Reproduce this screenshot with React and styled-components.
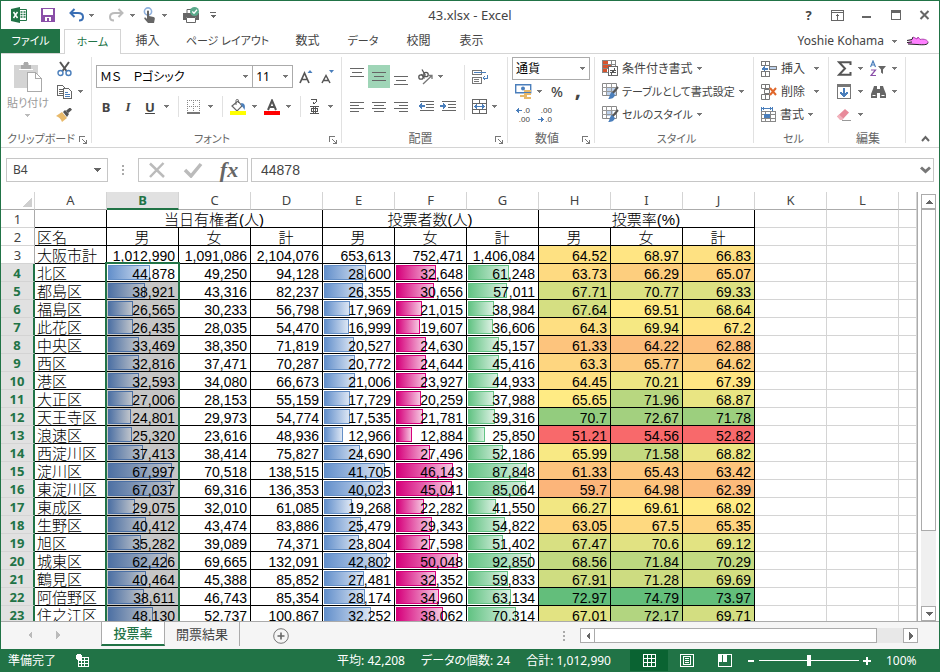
import React from 'react'
import styled, { createGlobalStyle, css } from 'styled-components'

const GREEN = '#217346'
const LINE = '#d4d4d4'
const UI_FONT = "'Noto Sans', 'Noto Sans CJK JP', sans-serif"
const CELL_FONT = "'Liberation Sans', 'Noto Sans CJK JP', sans-serif"

const GlobalStyle = createGlobalStyle`
* {
  box-sizing: border-box;
}
body {
  margin: 0;
  font-family: ${UI_FONT};
  font-size: 12px;
  line-height: 16px;
  font-feature-settings: 'palt';
  color: #444;
}
button, input, select {
  font: inherit;
  font-feature-settings: inherit;
  color: inherit;
  margin: 0;
  padding: 0;
  border: 0;
  border-radius: 0;
  background: none;
}
`

const Window = styled.div`
display: flex;
flex-direction: column;
height: 100vh;
border: 1px solid ${GREEN};
border-bottom: 0;
background: #fff;
overflow: hidden;
`

// ---------- title bar ----------

const TitleBar = styled.header`
display: grid;
grid-template-columns: 1fr auto 1fr;
align-items: center;
height: 28px;
flex: none;
`

const QuickAccess = styled.div`
display: flex;
align-items: center;
padding-left: 7px;
`

const Title = styled.h1`
margin: 0;
font-size: 13px;
font-weight: 400;
`

const WindowButtons = styled.div`
display: flex;
justify-content: flex-end;
`

const WindowButton = styled.button`
display: flex;
align-items: center;
justify-content: center;
width: 29px;
height: 26px;
`

// ---------- ribbon tabs ----------

const TabBar = styled.nav`
display: flex;
align-items: stretch;
height: 25px;
flex: none;
border-bottom: 1px solid ${LINE};
`

const FileTab = styled.button`
width: 59px;
margin-right: 4px;
background: ${GREEN};
color: #fff;
font-size: 11px;
`

const Tab = styled.button`
width: ${p => p.$width}px;
font-size: ${p => p.$kana ? 11 : 12}px;
white-space: nowrap;
${p => p.$active && css`
  border: 1px solid ${LINE};
  border-bottom: 0;
  margin-bottom: -1px;
  background: #fff;
  color: ${GREEN};
`}
`

const Account = styled.button`
display: flex;
align-items: center;
gap: 8px;
margin-left: auto;
padding-right: 10px;
`

// ---------- ribbon ----------

const Ribbon = styled.div`
display: flex;
flex: none;
height: 94px;
border-bottom: 1px solid ${LINE};
`

const Group = styled.section`
display: flex;
flex-direction: column;
justify-content: space-between;
width: ${p => p.$width}px;
padding: ${p => p.$top || 3}px 3px 0 ${p => p.$left || 3}px;
background: linear-gradient(#e1e1e1, #e1e1e1) right 3px / 1px 86px no-repeat;
`

const GroupLabel = styled.div`
display: flex;
align-items: center;
height: 17px;
color: #666;
font-size: ${p => p.$kana ? 11 : 12}px;

span {
  flex: 1;
  text-align: center;
  white-space: nowrap;
}
`

const Launcher = styled.button`
display: flex;
width: 10px;
padding-top: 2px;
`

const Columns = styled.div`
display: flex;
`

const Column = styled.div`
display: flex;
flex-direction: column;
gap: ${p => p.$gap || 0}px;
`

const Row = styled.div`
display: flex;
align-items: center;
height: 23px;
`

const Spacer = styled.div`
width: ${p => p.$width}px;
flex: none;
`

const ToolButton = styled.button`
display: flex;
align-items: center;
justify-content: center;
flex: none;
width: ${p => p.$width || 22}px;
height: 23px;
background: ${p => p.$on ? '#9fd5b7' : 'none'};
`

const CaretButton = styled(ToolButton)`
width: 12px;
`

const Separator = styled.div`
width: 1px;
height: ${p => p.$tall ? 55 : 21}px;
margin: 0 4px 0 5px;
background: #e1e1e1;
`

const PasteButton = styled.button`
display: flex;
flex-direction: column;
align-items: center;
width: 50px;
height: 66px;
padding-top: 4px;
color: #999;
font-size: 11px;
gap: 3px;
`

const MenuButton = styled.button`
display: flex;
align-items: center;
gap: 3px;
height: 23px;
white-space: nowrap;
font-size: ${p => p.$kana ? 11 : 12}px;

svg:last-child {
  margin-left: ${p => p.$wide ? 6 : 1}px;
}
`

const SelectBox = styled.label`
position: relative;
display: block;
width: ${p => p.$width}px;
margin-left: ${p => p.$joined ? -1 : 0}px;

select {
  width: 100%;
  height: 23px;
  padding: 0 3px;
  appearance: none;
  border: 1px solid #ababab;
  background: #fff;
  color: #000;
}
svg {
  position: absolute;
  right: 4px;
  top: 10px;
  pointer-events: none;
}
`

const Letter = styled.span`
font-size: 13px;
line-height: 16px;
font-weight: ${p => p.$italic ? 600 : 700};
font-style: ${p => p.$italic ? 'italic' : 'normal'};
font-family: ${p => p.$italic ? "'Liberation Serif', serif" : UI_FONT};
text-decoration: ${p => p.$underline ? 'underline' : 'none'};
`

const Percent = styled.span`
font-size: 14px;
font-weight: 500;
`

const Comma = styled.span`
font-size: 22px;
line-height: 8px;
height: 16px;
font-weight: 700;
`

const Collapse = styled.button`
display: flex;
flex: 1;
align-items: flex-end;
justify-content: center;
padding: 0 0 5px 5px;
`

// ---------- formula bar ----------

const FormulaBar = styled.div`
display: flex;
flex: none;
padding: 10px 5px;
font-family: ${CELL_FONT};
font-size: 14px;
`

const NameBox = styled.label`
display: flex;
align-items: center;
width: 102px;
height: 24px;
border: 1px solid #c6c6c6;
padding: 0 6px;

input {
  flex: 1;
  min-width: 0;
  font-family: ${UI_FONT};
  font-size: 12px;
}
`

const Grip = styled.div`
display: flex;
align-items: center;
justify-content: center;
width: ${p => p.$width}px;
`

const EntryButtons = styled.div`
display: flex;
align-items: center;
width: 110px;
height: 24px;
margin-right: 3px;
border: 1px solid #c6c6c6;

button {
  display: flex;
  flex: 1;
  justify-content: center;
}
`

const FormulaField = styled.label`
display: flex;
align-items: center;
flex: 1;
height: 24px;
border: 1px solid #c6c6c6;
padding: 0 2px 0 9px;

input {
  flex: 1;
  min-width: 0;
}
`

// ---------- sheet ----------

const SheetArea = styled.main`
display: flex;
flex: 1;
min-height: 0;
border-bottom: 1px solid #ababab;
`

const GridPane = styled.div`
flex: 1;
min-width: 0;
overflow: hidden;
border-right: 1px solid #ababab;
`

const Grid = styled.table`
width: 100%;
table-layout: fixed;
border-collapse: separate;
border-spacing: 0;
font-family: ${CELL_FONT};
font-feature-settings: normal;
color: #000;

th, td {
  padding: 0;
}
`

const RowHeadCol = styled.col`
width: 34px;
`

const DataCol = styled.col`
width: 72px;
`

const ColumnHead = styled.th`
height: 18px;
border-right: 1px solid ${LINE};
border-bottom: 1px solid #ababab;
font: 400 13px/15px ${UI_FONT};
color: #444;
${p => p.$selected && css`
  background: #e1e1e1;
  border-bottom: 2px solid ${GREEN};
  color: ${GREEN};
  font-weight: 700;
`}
`

const Corner = styled(ColumnHead)`
svg {
  display: block;
  margin: 3px 2px 0 auto;
}
`

const RowHead = styled.th`
height: 18px;
border-right: 1px solid #ababab;
border-bottom: 1px solid ${LINE};
font: 400 13px/15px ${UI_FONT};
color: #444;

&& {
  padding-top: 2px;
}
${p => p.$selected && css`
  background: #e1e1e1;
  border-right: 2px solid ${GREEN};
  color: ${GREEN};
  font-weight: 700;
`}
`

const Cell = styled.td`
position: relative;
height: 18px;
border-right: 1px solid ${p => p.$empty ? LINE : '#000'};
border-bottom: 1px solid ${p => p.$empty ? LINE : '#000'};
background: ${p => p.$shaded ? '#c6c6c6' : 'none'};
text-align: ${p => p.$align || 'right'};

${p => p.$selected && css`
  &::after {
    content: '';
    position: absolute;
    z-index: 2;
    inset: ${p.$active ? '-2px' : '0'} -2px -1px -2px;
    border: solid ${GREEN};
    border-width: ${p.$active ? '2px' : '0'} 2px 0 2px;
  }
`}
`

const CellText = styled.div`
position: relative;
z-index: 1;
height: 17px;
padding: 0 3px 0 2px;
overflow: hidden;
white-space: nowrap;
font-size: ${p => p.$label ? 15 : 14}px;
font-weight: ${p => p.$label ? 300 : 400};
line-height: 20px;
`

const barColors = {
  blue: ['#638ec6', '#6490cb', '#dce6f4'],
  shadow: ['#4a6fa5', '#4e71a4', '#bfc4cb'],
  pink: ['#d6007b', '#d6007b', '#f6c8e1'],
  green: ['#63c384', '#63c384', '#dcf1e3']
}

const Bar = styled.div`
position: absolute;
left: 1px;
top: 1px;
bottom: 1px;
border: 1px solid ${p => barColors[p.$color][0]};
background: linear-gradient(to right, ${p => barColors[p.$color][1]}, ${p => barColors[p.$color][2]});
`

const VScroll = styled.div`
display: flex;
flex-direction: column;
width: 21px;
padding: 2px 3px 0;
`

const ScrollButton = styled.button`
display: flex;
align-items: center;
justify-content: center;
flex: none;
width: 15px;
height: 15px;
border: 1px solid #ababab;
background: #fff;
`

const VTrack = styled.div`
flex: 1;
background: #f0f0f0;
`

const VThumb = styled.div`
height: 81%;
border: 1px solid #ababab;
background: #fff;
`

// ---------- sheet tabs ----------

const SheetBar = styled.div`
display: flex;
flex: none;
height: 27px;
background: #f5f5f5;
font-size: 13px;
`

const SheetNav = styled.div`
display: flex;
align-items: center;
width: 100px;
height: 26px;
padding-left: 15px;

button {
  display: flex;
  justify-content: center;
  width: 28px;
}
`

const SheetTab = styled.button`
height: 24px;
width: ${p => p.$active ? 64 : 75}px;
border-right: 1px solid #ababab;
${p => p.$active && css`
  border-left: 1px solid #ababab;
  border-bottom: 2px solid ${GREEN};
  background: #fff;
  color: ${GREEN};
  font-weight: 500;
`}
`

const AddSheet = styled.button`
display: flex;
align-items: center;
margin: 0 auto 0 33px;
`

const HScroll = styled.div`
display: flex;
width: 338px;
margin-right: 21px;
padding-top: 6px;
`

const HTrack = styled.div`
flex: 1;
height: 15px;
background: #e8e8e8;
`

const HThumb = styled.div`
width: 92%;
height: 15px;
margin-left: -1px;
border: 1px solid #ababab;
background: #fff;
`

// ---------- status bar ----------

const StatusBar = styled.footer`
display: flex;
align-items: center;
flex: none;
height: 23px;
padding: 0 19px 0 7px;
background: ${GREEN};
color: #fff;

button {
  display: flex;
  align-items: center;
  justify-content: center;
  height: 21px;
}
`

const Summary = styled.div`
display: flex;
gap: 16px;
margin-left: auto;
padding-right: 19px;
white-space: nowrap;
`

const ViewButton = styled.button`
width: 38px;
background: ${p => p.$on ? '#0a6332' : 'none'};
`

const ZoomButton = styled.button`
width: 14px;
`

const ZoomSlider = styled.input`
width: 100px;
height: 13px;
margin: 0 1px;
appearance: none;
background: linear-gradient(#fff, #fff) center / 100% 1px no-repeat;

&::-webkit-slider-thumb {
  appearance: none;
  width: 4px;
  height: 11px;
  background: #fff;
}
`

const ZoomLevel = styled.span`
width: 34px;
margin-left: 12px;
`

// ---------- icons ----------

const Svg = ({ w = 16, h = 16, soft, children }) => (
  <svg width={w} height={h} viewBox={`0 0 ${w} ${h}`} fill='none' aria-hidden='true' shapeRendering={soft ? 'auto' : 'crispEdges'}>
    {children}
  </svg>
)

const Caret = ({ color = '#777' }) => (
  <Svg w={6} h={3}><path d='M0 0h5v1h-1v1h-1v1h-1v-1h-1v-1h-1z' fill={color} /></Svg>
)

const LauncherIcon = () => (
  <Svg w={8} h={8}>
    <path d='M.5 6V.5H6M3 3l4 4M7.500 3.500v4h-4' stroke='#777' />
  </Svg>
)

const ExcelIcon = () => (
  <Svg soft>
    <path d='M8 2.500h7.500v11H8' stroke={GREEN} fill='#fff' />
    <path d='M9.500 5h2M12.500 5h2M9.500 7.500h2M12.500 7.500h2M9.500 10h2M12.500 10h2' stroke={GREEN} strokeWidth='1.400' />
    <path d='M0 2l9-2v16l-9-2z' fill={GREEN} />
    <path d='M2.500 5l4 6M6.500 5l-4 6' stroke='#fff' strokeWidth='1.500' />
  </Svg>
)

const SaveIcon = () => (
  <Svg w={14} h={14}>
    <path d='M0 0h14v14H0z' fill='#8a4fa8' />
    <path d='M2 1h10v6H2zM4 9h6v4H8v-3H6v3H4z' fill='#fff' />
  </Svg>
)

const UndoIcon = ({ flip, color }) => (
  <Svg w={15} h={14} soft>
    <g transform={flip ? 'matrix(-1 0 0 1 15 0)' : undefined}>
      <path d='M2 5h7c3 0 5 1.500 5 4s-2 3.500-4 3.500' stroke={color} strokeWidth='2' />
      <path d='M5.500 1L1.500 5l4 4' stroke={color} strokeWidth='2' />
    </g>
  </Svg>
)

const TouchIcon = () => (
  <Svg w={13} h={17} soft>
    <circle cx='5' cy='4.500' r='3.600' stroke='#8fb0dc' strokeWidth='1.600' />
    <path d='M4 4.500c0-1.200 2-1.200 2 0V9l4.500 1c1 .3 1.500 1 1.300 2L11 16H5l-3.500-4c-.8-1.200.5-2 1.300-1.200L4 12z' fill='#666' />
  </Svg>
)

const PrintIcon = () => (
  <Svg w={17} h={17} soft>
    <path d='M4 7V2.500h4' stroke='#666' />
    <path d='M0 6h16v7h-3v-3H3v3H0z' fill='#666' />
    <path d='M3.500 10.500h9v5h-9z' fill='#fff' stroke='#666' />
    <circle cx='11.500' cy='4.500' r='4.500' fill='#5aa98b' />
    <path d='M9.300 4.500l1.700 1.700 3-3.400' stroke='#fff' strokeWidth='1.300' />
  </Svg>
)

const CustomizeIcon = () => (
  <Svg w={6} h={7}><path d='M0 0h6v1H0zM0 3h6L3 6z' fill='#666' /></Svg>
)

const DisplayIcon = () => (
  <Svg w={13} h={11}>
    <path d='M.5.500h12v10H.5zM0 2.500h13M6.500 4.500v5M4.500 6.500l2-2 2 2' stroke='#666' />
  </Svg>
)

const MinimizeIcon = () => (
  <Svg w={9} h={10}><path d='M0 6h9v2H0z' fill='#666' /></Svg>
)

const MaximizeIcon = () => (
  <Svg w={10} h={10}><path d='M0 0h10v10H0zM1 3v6h8V3z' fill='#666' fillRule='evenodd' /></Svg>
)

const CloseIcon = () => (
  <Svg w={11} h={10} soft><path d='M1.500 1l8 8M9.500 1l-8 8' stroke='#666' strokeWidth='2' /></Svg>
)

const AvatarIcon = () => (
  <Svg w={23} h={10} soft>
    <path d='M1 4.500l5-1 1-2.500 4 2 1-2 2 2.500c4-1 8 .5 8 3S17 9 11 8.500L2 8l-1-1.500 5-.5z' fill='#ff80ff' />
    <path d='M1 4.500l5-1 1-2.500M1 6.500l5-.5M2 8l9 .5c6 .5 11 .5 11-2' stroke='#222' />
    <path d='M7 1l4 2 1-2 2 2.500c4-1 8 .5 8 3' stroke='#b040b0' />
  </Svg>
)

const PasteIcon = () => (
  <Svg w={28} h={31}>
    <path d='M0 4h9V2h6v2h9v23H0z' fill='#d4d4d4' />
    <path d='M7 4h3V1h4v3h3v4H7z' fill='#aaa' />
    <path d='M5 8h14' stroke='#fff' />
    <path d='M13.500 11.500h8l6 6v13h-14z' fill='#fff' stroke='#aaa' />
    <path d='M21.500 11.500v6h6' stroke='#aaa' />
  </Svg>
)

const CutIcon = () => (
  <Svg w={15} h={16} soft>
    <path d='M3 1l6.500 9M12 1L5.500 10' stroke='#555' strokeWidth='2' />
    <circle cx='3.500' cy='12' r='2.500' stroke='#4a7ebb' strokeWidth='1.400' />
    <circle cx='11.500' cy='12' r='2.500' stroke='#4a7ebb' strokeWidth='1.400' />
  </Svg>
)

const CopyIcon = () => (
  <Svg w={15} h={14}>
    <path d='M.5.500h5l3 3v7h-8zM2 4.500h4M2 6.500h4M2 8.500h4' stroke='#666' />
    <path d='M6.500 3.500h5l3 3v7h-8z' fill='#fff' stroke='#666' />
    <path d='M8 7.500h3M8 9.500h5M8 11.500h5' stroke='#4a7ebb' />
  </Svg>
)

const BrushIcon = () => (
  <Svg w={16} h={14} soft>
    <path d='M0 8l6-4 5 6-5 4c-1-3-3-5-6-6z' fill='#e8b96a' />
    <path d='M7 4l2-2 4 4-2 3z' fill='#555' />
    <path d='M11 4l4-3.500' stroke='#555' strokeWidth='3' />
  </Svg>
)

const FontSizeIcon = ({ down }) => (
  <Svg w={14} h={16} soft>
    {down
      ? <path d='M1 14L5 6.500 9 14M2.500 11.500h5' stroke='#555' strokeWidth='1.500' />
      : <path d='M1 14L5.500 4 10 14M2.500 10.500h6' stroke='#555' strokeWidth='1.700' />}
    <path d={down ? 'M8 1h5l-2.500 3z' : 'M8.500 4h5L11 1z'} fill='#4a7ebb' />
  </Svg>
)

const BordersIcon = () => (
  <Svg w={14} h={14}>
    <path d='M.5 0v13M6.500 0v13M12.500 0v13M0 .5h13M0 6.500h13' stroke='#888' strokeDasharray='1 1' />
    <path d='M0 13h13' stroke='#777' strokeWidth='2' />
  </Svg>
)

const FillIcon = () => (
  <Svg w={16} h={16} soft>
    <path d='M2 7l6-5 4 5-5 5z' fill='#fff' stroke='#666' strokeWidth='1.200' />
    <path d='M6 6V1.500c0-1.500 2.500-1.500 2.500 0V4' stroke='#666' />
    <path d='M11 4c4 0 4.500 3 3.500 7-1-2-1.500-3-3-4z' fill='#4a7ebb' />
    <path d='M0 12h16v4H0z' fill='#ff0' />
  </Svg>
)

const FontColorIcon = () => (
  <Svg w={16} h={16} soft>
    <path d='M4 11l4-9.500 4 9.500M5.500 8h5' stroke='#555' strokeWidth='2' />
    <path d='M0 12h16v4H0z' fill='#f00' />
  </Svg>
)

const PhoneticIcon = () => (
  <Svg w={10} h={17}>
    <path d='M1 1.500h6M6.500 1.500v2l-3 3M3.500 3.500v2' stroke='#555' />
    <path d='M0 8.500h9M3.500 8v8M5.500 8v8M1.500 10.500h6v3h-6zM0 15.500h9' stroke='#555' />
  </Svg>
)

const LinesIcon = ({ rows, y = 0 }) => (
  <Svg w={22} h={23}>
    {rows.map(([x, width], i) => (
      <path key={i} d={`M${x} ${y + i * (rows.length > 3 ? 3 : 4) + 0.5}h${width}`} stroke='#666' />
    ))}
  </Svg>
)

const OrientationIcon = () => (
  <Svg w={17} h={16} soft>
    <circle cx='4' cy='8' r='2.200' stroke='#555' strokeWidth='1.300' />
    <circle cx='9' cy='5.500' r='2.200' stroke='#555' strokeWidth='1.300' />
    <path d='M4.500 5l3 4.500M5 .5l3.500 6' stroke='#555' strokeWidth='1.300' />
    <path d='M6 15l9-8.500M11.500 6.500h3.500v3.500' stroke='#777' strokeWidth='1.300' />
  </Svg>
)

const IndentIcon = ({ right }) => (
  <Svg w={16} h={11}>
    <path d='M2 .5h14M8 3.500h8M8 6.500h8M2 9.500h14' stroke='#666' />
    <path d={right ? 'M0 4h3V2l4 3-4 3V6H0z' : 'M7 4H4V2L0 5l4 3V6h3z'} fill='#4a7ebb' />
  </Svg>
)

const WrapIcon = () => (
  <Svg w={17} h={16}>
    <path d='M.5 1.500h9v4h-9zM.5 8.500h9v6h-9zM2 10.500h5M2 12.500h5' stroke='#777' />
    <path d='M2 3.500h12M15.500 6v3h-4M13 7l-2 2 2 2' stroke='#4a7ebb' />
  </Svg>
)

const MergeIcon = () => (
  <Svg w={15} h={15}>
    <path d='M.5.500h14v14H.5zM.5 4.500h14M.5 10.500h14M7.500 0v4M7.500 11v4' stroke='#666' />
    <path d='M3 7.500h9M5 5.500l-2 2 2 2M10 5.500l2 2-2 2' stroke='#4a7ebb' />
  </Svg>
)

const CurrencyIcon = () => (
  <Svg w={17} h={17} soft>
    <path d='M.7 1.700h15v8H.7z' fill='#fff' stroke='#4a7ebb' strokeWidth='1.400' />
    <circle cx='8' cy='5.500' r='2' fill='#4a7ebb' />
    <path d='M9 7h7v2H9zM9 10h7v2H9zM5 12h7v2H5zM9 14h7v2H9z' fill='#e8b96a' />
  </Svg>
)

const Decimals = styled.span`
display: flex;
flex-direction: column;
font-family: ${CELL_FONT};
font-size: 8px;
line-height: 9px;
text-align: right;

span {
  display: flex;
  align-items: center;
  justify-content: flex-end;
  gap: 1px;
}
`

const SmallArrow = ({ right }) => (
  <Svg w={6} h={5}><path d={right ? 'M0 2.500h5M3 .5l2 2-2 2' : 'M1 2.500h5M3 .5l-2 2 2 2'} stroke='#4a7ebb' /></Svg>
)

const ConditionalIcon = () => (
  <Svg w={17} h={17}>
    <path d='M.5.500h13v12H.5zM0 4.500h13M0 8.500h13M9.500 0v12' stroke='#888' />
    <path d='M1 1h5v3H1zM1 5h8v3H1zM1 9h4v3H1z' fill='#d6532d' />
    <path d='M6.500 6.500h9v9h-9z' fill='#fff' stroke='#666' />
    <path d='M8 10.500h6M8 12.500h6M13 8l-4 7' stroke='#555' />
  </Svg>
)

const TableStyleIcon = ({ plain }) => (
  <Svg w={17} h={17} soft>
    <path d='M.5.500h14v12H.5z' fill='#fff' stroke='#888' />
    <path d={plain ? 'M4 4h7v6H4z' : 'M5 4h9v8H5z'} fill='#bcd0ea' />
    <path d='M0 4.500h15M0 8.500h15M4.500 0v12M9.500 0v12' stroke='#999' />
    <path d='M16 4l-6 7' stroke='#555' strokeWidth='2' />
    <path d='M10 9l3 3c-1 3-3 4-7 4 2-1 1-5 4-7z' fill='#4a7ebb' />
  </Svg>
)

const CellsInsertIcon = () => (
  <Svg w={17} h={16}>
    <path d='M.5.500h8v4h-8zM4.500 0v4M.5 10.500h8v5h-8zM4.500 11v5' stroke='#777' />
    <path d='M8.500 5.500h7v3h-7z' fill='#bcd0ea' stroke='#777' />
    <path d='M1 7.500h6M4 5.500l-2 2 2 2' stroke='#4a7ebb' strokeWidth='2' />
  </Svg>
)

const CellsDeleteIcon = () => (
  <Svg w={17} h={16} soft>
    <path d='M.5.500h8v4h-8zM4.500 0v4M.5 10.500h8v5h-8zM4.500 11v5M3.500 5.500h5v4h-5z' stroke='#777' />
    <path d='M9 4l6 7M15 4l-6 7' stroke='#e0672b' strokeWidth='2' />
  </Svg>
)

const CellsFormatIcon = () => (
  <Svg w={16} h={16}>
    <path d='M.5 0v4M11.500 0v4M1 1.500h10M3 .5l-2 1 2 1M9 .5l2 1-2 1' stroke='#4a7ebb' />
    <path d='M.5 4.500h14v10H.5zM0 7.500h15M0 11.500h15M4.500 4v11M9.500 4v11' stroke='#888' />
    <path d='M3 7h6v4H3z' fill='#4a7ebb' />
  </Svg>
)

const SumIcon = () => (
  <Svg w={15} h={15} soft><path d='M13.500 4V1.200H2L8 7.500l-6 6.300h11.500V11' stroke='#555' strokeWidth='2' /></Svg>
)

const SortIcon = () => (
  <Svg w={17} h={17} soft>
    <path d='M.5 7L3 1l2.500 6M1.500 5h3' stroke='#4a7ebb' strokeWidth='1.200' />
    <path d='M1 10h4.500L1 15.500h5' stroke='#8a4fa8' strokeWidth='1.200' />
    <path d='M8 6h8l-3 3.500V14l-2-1.500v-3z' fill='#666' />
  </Svg>
)

const FillDownIcon = () => (
  <Svg w={14} h={15}>
    <path d='M.5.500h13v14H.5z' stroke='#777' />
    <path d='M0 0h14v3H0z' fill='#777' />
    <path d='M7 4v8M3.500 8.500L7 12l3.500-3.500' stroke='#4a7ebb' strokeWidth='2' />
  </Svg>
)

const FindIcon = () => (
  <Svg w={15} h={14} soft>
    <path d='M3 1h3v3h3V1h3l1 3 2 5v4H9V8H6v5H0V9l2-5z' fill='#666' />
    <path d='M1.500 10.500h3M10.500 10.500h3' stroke='#fff' />
  </Svg>
)

const EraserIcon = () => (
  <Svg w={14} h={13} soft>
    <path d='M0 8.500L8 1l4 3.500L5 12z' fill='#e88a9a' />
    <path d='M0 8.500l2-2 4.500 4L5 12H3z' fill='#f2b3bd' />
    <path d='M5 12.500h9' stroke='#999' />
  </Svg>
)

const CollapseIcon = () => (
  <Svg w={9} h={7} soft><path d='M1 6l3.500-4L8 6' stroke='#666' strokeWidth='2' /></Svg>
)

const DotsIcon = () => (
  <Svg w={2} h={10}><path d='M0 0h2v2H0zM0 4h2v2H0zM0 8h2v2H0z' fill='#aaa' /></Svg>
)

const CancelIcon = () => (
  <Svg w={18} h={16} soft><path d='M2 1.500L16 15M15.500 1L2 15' stroke='#bbb' strokeWidth='2.500' /></Svg>
)

const EnterIcon = () => (
  <Svg w={20} h={16} soft><path d='M2 8l6 6L18 2' stroke='#bbb' strokeWidth='3.500' /></Svg>
)

const FxLabel = styled.span`
font: italic 700 22px/22px 'Liberation Serif', serif;
color: #666;
`

const ExpandIcon = () => (
  <Svg w={11} h={8} soft><path d='M1 1.500l4.500 4 4.500-4' stroke='#777' strokeWidth='3' /></Svg>
)

const CornerIcon = () => (
  <Svg w={10} h={10}><path d='M10 0v10H0z' fill='#cfcfcf' /></Svg>
)

const triangles = {
  up: 'M0 4l4-4 4 4z',
  down: 'M0 0h8L4 4z',
  left: 'M4 0v8L0 4z',
  right: 'M0 0v8l4-4z'
}

const Triangle = ({ dir, color = '#666' }) => {
  const side = dir === 'left' || dir === 'right'
  return <Svg w={side ? 4 : 8} h={side ? 8 : 4}><path d={triangles[dir]} fill={color} /></Svg>
}

const AddIcon = () => (
  <Svg w={16} h={16} soft>
    <circle cx='8' cy='8' r='7.300' stroke='#777' />
    <path d='M8 4.500v7M4.500 8h7' stroke='#666' strokeWidth='1.600' />
  </Svg>
)

const MacroIcon = () => (
  <Svg w={13} h={13}>
    <path d='M2.500 3.500h10v9h-10zM2 6.500h10M2 9.500h10M5.500 4v8M8.500 4v8' stroke='#fff' />
    <circle cx='3' cy='3' r='3' fill='#fff' />
  </Svg>
)

const NormalViewIcon = () => (
  <Svg w={13} h={13}><path d='M.5.500h12v12H.5zM.5 4.500h12M.5 8.500h12M4.500 0v13M8.500 0v13' stroke='#fff' /></Svg>
)

const PageViewIcon = () => (
  <Svg w={14} h={13}><path d='M.5.500h13v12H.5zM3.500 2.500h7v8h-7zM5 4.500h4M5 6.500h4M5 8.500h4' stroke='#fff' /></Svg>
)

const BreakViewIcon = () => (
  <Svg w={14} h={13}>
    <path d='M.5.500h13v12H.5z' stroke='#fff' />
    <path d='M1 1h3v7H1zM5 1h4v7H5z' fill='#fff' />
  </Svg>
)

const PlusMinus = ({ plus }) => (
  <Svg w={8} h={8}><path d={plus ? 'M0 3h3V0h2v3h3v2H5v3H3V5H0z' : 'M1 3h6v2H1z'} fill='#fff' /></Svg>
)

// ---------- data ----------

const columns = ['A', 'B', 'C', 'D', 'E', 'F', 'G', 'H', 'I', 'J', 'K', 'L', '']

const wards = [
  ['大阪市計', 1012990, 1091086, 2104076, 653613, 752471, 1406084, 64.52, 68.97, 66.83],
  ['北区', 44878, 49250, 94128, 28600, 32648, 61248, 63.73, 66.29, 65.07],
  ['都島区', 38921, 43316, 82237, 26355, 30656, 57011, 67.71, 70.77, 69.33],
  ['福島区', 26565, 30233, 56798, 17969, 21015, 38984, 67.64, 69.51, 68.64],
  ['此花区', 26435, 28035, 54470, 16999, 19607, 36606, 64.3, 69.94, 67.2],
  ['中央区', 33469, 38350, 71819, 20527, 24630, 45157, 61.33, 64.22, 62.88],
  ['西区', 32816, 37471, 70287, 20772, 24644, 45416, 63.3, 65.77, 64.62],
  ['港区', 32593, 34080, 66673, 21006, 23927, 44933, 64.45, 70.21, 67.39],
  ['大正区', 27006, 28153, 55159, 17729, 20259, 37988, 65.65, 71.96, 68.87],
  ['天王寺区', 24801, 29973, 54774, 17535, 21781, 39316, 70.7, 72.67, 71.78],
  ['浪速区', 25320, 23616, 48936, 12966, 12884, 25850, 51.21, 54.56, 52.82],
  ['西淀川区', 37413, 38414, 75827, 24690, 27496, 52186, 65.99, 71.58, 68.82],
  ['淀川区', 67997, 70518, 138515, 41705, 46143, 87848, 61.33, 65.43, 63.42],
  ['東淀川区', 67037, 69316, 136353, 40023, 45041, 85064, 59.7, 64.98, 62.39],
  ['東成区', 29075, 32010, 61085, 19268, 22282, 41550, 66.27, 69.61, 68.02],
  ['生野区', 40412, 43474, 83886, 25479, 29343, 54822, 63.05, 67.5, 65.35],
  ['旭区', 35282, 39089, 74371, 23804, 27598, 51402, 67.47, 70.6, 69.12],
  ['城東区', 62426, 69665, 132091, 42802, 50048, 92850, 68.56, 71.84, 70.29],
  ['鶴見区', 40464, 45388, 85852, 27481, 32352, 59833, 67.91, 71.28, 69.69],
  ['阿倍野区', 38611, 46743, 85354, 28174, 34960, 63134, 72.97, 74.79, 73.97],
  ['住之江区', 48130, 52737, 100867, 32252, 38062, 70314, 67.01, 72.17, 69.71]
]

// value at which a data bar fills its cell, by column
const bars = {
  1: { color: 'blue', full: 75500 },
  4: { color: 'blue', full: 48300 },
  5: { color: 'pink', full: 57500 },
  6: { color: 'green', full: 105000 }
}

const scales = {
  7: [51.21, 65.65, 72.97],
  8: [54.56, 69.61, 74.79],
  9: [52.82, 68.02, 73.97]
}

const LOW = [248, 105, 107]
const MID = [255, 235, 132]
const HIGH = [99, 190, 123]

function scaleColor (value, [min, mid, max]) {
  const [from, to, t] = value < mid
    ? [LOW, MID, (value - min) / (mid - min)]
    : [MID, HIGH, (value - mid) / (max - mid)]
  return `rgb(${from.map((c, i) => Math.round(c + (to[i] - c) * t)).join(', ')})`
}

function EmptyCells () {
  return <><Cell $empty /><Cell $empty /><Cell $empty /></>
}

function DataCell ({ value, col, row }) {
  if (col === 0) return <Cell $align='left'><CellText $label>{value}</CellText></Cell>
  const bar = row > 3 && bars[col]
  const selected = col === 1 && row > 3
  const shaded = selected && row > 4
  return (
    <Cell
      $selected={selected} $active={selected && row === 4} $shaded={shaded}
      style={scales[col] && { background: scaleColor(value, scales[col]) }}
    >
      {bar && <Bar $color={shaded ? 'shadow' : bar.color} style={{ width: `${value / bar.full * 100}%` }} />}
      <CellText>{scales[col] ? value : value.toLocaleString('en-US')}</CellText>
    </Cell>
  )
}

function Sheet () {
  return (
    <Grid>
      <colgroup>
        <RowHeadCol />
        {columns.slice(0, 12).map(c => <DataCol key={c} />)}
        <col />
      </colgroup>
      <thead>
        <tr>
          <Corner><CornerIcon /></Corner>
          {columns.map(c => <ColumnHead key={c} $selected={c === 'B'}>{c}</ColumnHead>)}
        </tr>
      </thead>
      <tbody>
        <tr>
          <RowHead>1</RowHead>
          <Cell />
          {['当日有権者(人)', '投票者数(人)', '投票率(%)'].map(t => (
            <Cell key={t} colSpan={3} $align='center'><CellText $label>{t}</CellText></Cell>
          ))}
          <EmptyCells />
        </tr>
        <tr>
          <RowHead>2</RowHead>
          <Cell $align='left'><CellText $label>区名</CellText></Cell>
          {['男', '女', '計', '男', '女', '計', '男', '女', '計'].map((t, i) => (
            <Cell key={i} $align='center'><CellText $label>{t}</CellText></Cell>
          ))}
          <EmptyCells />
        </tr>
        {wards.map((ward, i) => (
          <tr key={ward[0]}>
            <RowHead $selected={i > 0}>{i + 3}</RowHead>
            {ward.map((value, col) => <DataCell key={col} value={value} col={col} row={i + 3} />)}
            <EmptyCells />
          </tr>
        ))}
      </tbody>
    </Grid>
  )
}

function Tool ({ label, menu, children, ...rest }) {
  return (
    <>
      <ToolButton aria-label={label} {...rest}>{children}</ToolButton>
      {menu && <CaretButton aria-label={`${label} メニュー`}><Caret /></CaretButton>}
    </>
  )
}

function Label ({ children, kana, launcher = true }) {
  return (
    <GroupLabel $kana={kana}>
      <span>{children}</span>
      {launcher && <Launcher aria-label={`${children}の設定`}><LauncherIcon /></Launcher>}
    </GroupLabel>
  )
}

function ClipboardGroup () {
  return (
    <Group $width={91} $left={2}>
      <Columns>
        <PasteButton><PasteIcon />貼り付け<Caret color='#bbb' /></PasteButton>
        <Column>
          <Row><Tool label='切り取り'><CutIcon /></Tool></Row>
          <Row><Tool label='コピー' menu><CopyIcon /></Tool></Row>
          <Row><Tool label='書式のコピー'><BrushIcon /></Tool></Row>
        </Column>
      </Columns>
      <Label kana>クリップボード</Label>
    </Group>
  )
}

function FontGroup () {
  return (
    <Group $width={250} $top={11}>
      <Column $gap={7}>
        <Row>
          <Spacer $width={1} />
          <SelectBox $width={158}>
            <select aria-label='フォント名'><option>ＭＳ　Ｐゴシック</option></select>
            <Caret />
          </SelectBox>
          <SelectBox $width={41} $joined>
            <select aria-label='フォント サイズ'><option>11</option></select>
            <Caret />
          </SelectBox>
          <Spacer $width={2} />
          <Tool label='拡大'><FontSizeIcon /></Tool>
          <Tool label='縮小'><FontSizeIcon down /></Tool>
        </Row>
        <Row>
          <Tool label='太字'><Letter>B</Letter></Tool>
          <Tool label='斜体'><Letter $italic>I</Letter></Tool>
          <Tool label='下線' menu><Letter $underline>U</Letter></Tool>
          <Separator />
          <Tool label='罫線' menu><BordersIcon /></Tool>
          <Separator />
          <Tool label='塗りつぶし' menu><FillIcon /></Tool>
          <Tool label='文字色' menu><FontColorIcon /></Tool>
          <Separator />
          <Tool label='ふりがな' $width={20} menu><PhoneticIcon /></Tool>
        </Row>
      </Column>
      <Label kana>フォント</Label>
    </Group>
  )
}

function AlignmentGroup () {
  return (
    <Group $width={166} $top={11} $left={4}>
      <Columns>
        <Column $gap={7}>
          <Row>
            <Tool label='上揃え'><LinesIcon y={3} rows={[[4, 14], [6, 10], [4, 14]]} /></Tool>
            <Tool label='上下中央揃え' $on><LinesIcon y={7} rows={[[4, 14], [6, 10], [4, 14]]} /></Tool>
            <Tool label='下揃え'><LinesIcon y={11} rows={[[4, 14], [6, 10], [4, 14]]} /></Tool>
            <Spacer $width={3} />
            <Tool label='方向' $width={20} menu><OrientationIcon /></Tool>
          </Row>
          <Row>
            <Tool label='左揃え'><LinesIcon y={7} rows={[[4, 14], [4, 9], [4, 14], [4, 9]]} /></Tool>
            <Tool label='中央揃え'><LinesIcon y={7} rows={[[4, 14], [6, 10], [4, 14], [6, 10]]} /></Tool>
            <Tool label='右揃え'><LinesIcon y={7} rows={[[4, 14], [9, 9], [4, 14], [9, 9]]} /></Tool>
            <Spacer $width={3} />
            <Tool label='インデントを減らす'><IndentIcon /></Tool>
            <Tool label='インデントを増やす'><IndentIcon right /></Tool>
          </Row>
        </Column>
        <Separator $tall />
        <Column $gap={7}>
          <Row><Tool label='折り返して全体を表示'><WrapIcon /></Tool></Row>
          <Row><Tool label='セルを結合して中央揃え' $width={20} menu><MergeIcon /></Tool></Row>
        </Column>
      </Columns>
      <Label>配置</Label>
    </Group>
  )
}

function NumberGroup () {
  return (
    <Group $width={87} $left={4}>
      <Column>
        <Row>
          <SelectBox $width={78}>
            <select aria-label='表示形式'><option>通貨</option></select>
            <Caret />
          </SelectBox>
        </Row>
        <Row>
          <Tool label='通貨表示形式' menu><CurrencyIcon /></Tool>
          <Tool label='パーセント'><Percent>%</Percent></Tool>
          <Tool label='桁区切り' $width={20}><Comma>,</Comma></Tool>
        </Row>
        <Row>
          <Tool label='小数点以下の表示桁数を増やす'>
            <Decimals><span><SmallArrow />.0</span>.00</Decimals>
          </Tool>
          <Tool label='小数点以下の表示桁数を減らす'>
            <Decimals>.00<span><SmallArrow right />.0</span></Decimals>
          </Tool>
        </Row>
      </Column>
      <Label>数値</Label>
    </Group>
  )
}

function StyleGroup () {
  return (
    <Group $width={159} $left={7}>
      <Column>
        <MenuButton><ConditionalIcon />条件付き書式<Caret /></MenuButton>
        <MenuButton $kana><TableStyleIcon />テーブルとして書式設定<Caret /></MenuButton>
        <MenuButton $kana><TableStyleIcon plain />セルのスタイル<Caret /></MenuButton>
      </Column>
      <Label kana launcher={false}>スタイル</Label>
    </Group>
  )
}

function CellsGroup () {
  return (
    <Group $width={75} $left={7}>
      <Column>
        <MenuButton $wide><CellsInsertIcon />挿入<Caret /></MenuButton>
        <MenuButton $wide><CellsDeleteIcon />削除<Caret /></MenuButton>
        <MenuButton><CellsFormatIcon />書式<Caret /></MenuButton>
      </Column>
      <Label kana launcher={false}>セル</Label>
    </Group>
  )
}

function EditGroup () {
  return (
    <Group $width={77} $left={4}>
      <Column>
        <Row>
          <Tool label='オート SUM' menu><SumIcon /></Tool>
          <Tool label='並べ替えとフィルター' menu><SortIcon /></Tool>
        </Row>
        <Row>
          <Tool label='フィル' menu><FillDownIcon /></Tool>
          <Tool label='検索と選択' menu><FindIcon /></Tool>
        </Row>
        <Row><Tool label='クリア' menu><EraserIcon /></Tool></Row>
      </Column>
      <Label launcher={false}>編集</Label>
    </Group>
  )
}

export default function App () {
  return (
    <Window>
      <GlobalStyle />
      <TitleBar>
        <QuickAccess>
          <Tool label='Excel'><ExcelIcon /></Tool>
          <Spacer $width={7} />
          <Tool label='上書き保存'><SaveIcon /></Tool>
          <Spacer $width={7} />
          <Tool label='元に戻す' $width={20} menu><UndoIcon color='#3a6fb5' /></Tool>
          <Spacer $width={7} />
          <Tool label='やり直し' menu><UndoIcon flip color='#bbb' /></Tool>
          <Tool label='タッチ' $width={20} menu><TouchIcon /></Tool>
          <Spacer $width={9} />
          <Tool label='印刷プレビュー'><PrintIcon /></Tool>
          <Tool label='カスタマイズ'><CustomizeIcon /></Tool>
        </QuickAccess>
        <Title>43.xlsx - Excel</Title>
        <WindowButtons>
          <WindowButton aria-label='ヘルプ'><Letter>?</Letter></WindowButton>
          <WindowButton aria-label='リボンの表示オプション'><DisplayIcon /></WindowButton>
          <WindowButton aria-label='最小化'><MinimizeIcon /></WindowButton>
          <WindowButton aria-label='最大化'><MaximizeIcon /></WindowButton>
          <WindowButton aria-label='閉じる'><CloseIcon /></WindowButton>
        </WindowButtons>
      </TitleBar>
      <TabBar>
        <FileTab>ファイル</FileTab>
        <Tab $width={57} $kana $active>ホーム</Tab>
        <Tab $width={53}>挿入</Tab>
        <Tab $width={107} $kana>ページ レイアウト</Tab>
        <Tab $width={53}>数式</Tab>
        <Tab $width={58} $kana>データ</Tab>
        <Tab $width={53}>校閲</Tab>
        <Tab $width={53}>表示</Tab>
        <Account>Yoshie Kohama<Caret /><AvatarIcon /></Account>
      </TabBar>
      <Ribbon>
        <ClipboardGroup />
        <FontGroup />
        <AlignmentGroup />
        <NumberGroup />
        <StyleGroup />
        <CellsGroup />
        <EditGroup />
        <Collapse aria-label='リボンを折りたたむ'><CollapseIcon /></Collapse>
      </Ribbon>
      <FormulaBar>
        <NameBox>
          <input aria-label='名前ボックス' defaultValue='B4' />
          <Triangle dir='down' />
        </NameBox>
        <Grip $width={30}><DotsIcon /></Grip>
        <EntryButtons>
          <button aria-label='キャンセル'><CancelIcon /></button>
          <button aria-label='入力'><EnterIcon /></button>
          <button aria-label='関数の挿入'><FxLabel>fx</FxLabel></button>
        </EntryButtons>
        <FormulaField>
          <input aria-label='数式バー' defaultValue='44878' />
          <ExpandIcon />
        </FormulaField>
      </FormulaBar>
      <SheetArea>
        <GridPane><Sheet /></GridPane>
        <VScroll>
          <ScrollButton aria-label='上へ'><Triangle dir='up' /></ScrollButton>
          <VTrack><VThumb /></VTrack>
          <ScrollButton aria-label='下へ'><Triangle dir='down' /></ScrollButton>
        </VScroll>
      </SheetArea>
      <SheetBar>
        <SheetNav>
          <button aria-label='前のシート'><Triangle dir='left' color='#bbb' /></button>
          <button aria-label='次のシート'><Triangle dir='right' color='#bbb' /></button>
        </SheetNav>
        <SheetTab $active>投票率</SheetTab>
        <SheetTab>開票結果</SheetTab>
        <AddSheet aria-label='新しいシート'><AddIcon /></AddSheet>
        <Grip $width={33}><DotsIcon /></Grip>
        <HScroll>
          <ScrollButton aria-label='左へ'><Triangle dir='left' /></ScrollButton>
          <HTrack><HThumb /></HTrack>
          <ScrollButton aria-label='右へ'><Triangle dir='right' /></ScrollButton>
        </HScroll>
      </SheetBar>
      <StatusBar>
        <span>準備完了</span>
        <Spacer $width={15} />
        <ToolButton aria-label='マクロの記録'><MacroIcon /></ToolButton>
        <Summary>
          <span>平均: 42,208</span>
          <span>データの個数: 24</span>
          <span>合計: 1,012,990</span>
        </Summary>
        <ViewButton $on aria-label='標準'><NormalViewIcon /></ViewButton>
        <ViewButton aria-label='ページ レイアウト'><PageViewIcon /></ViewButton>
        <ViewButton aria-label='改ページ プレビュー'><BreakViewIcon /></ViewButton>
        <ZoomButton aria-label='縮小'><PlusMinus /></ZoomButton>
        <ZoomSlider type='range' min='0' max='100' defaultValue='50' aria-label='ズーム' />
        <ZoomButton aria-label='拡大'><PlusMinus plus /></ZoomButton>
        <ZoomLevel>100%</ZoomLevel>
      </StatusBar>
    </Window>
  )
}
